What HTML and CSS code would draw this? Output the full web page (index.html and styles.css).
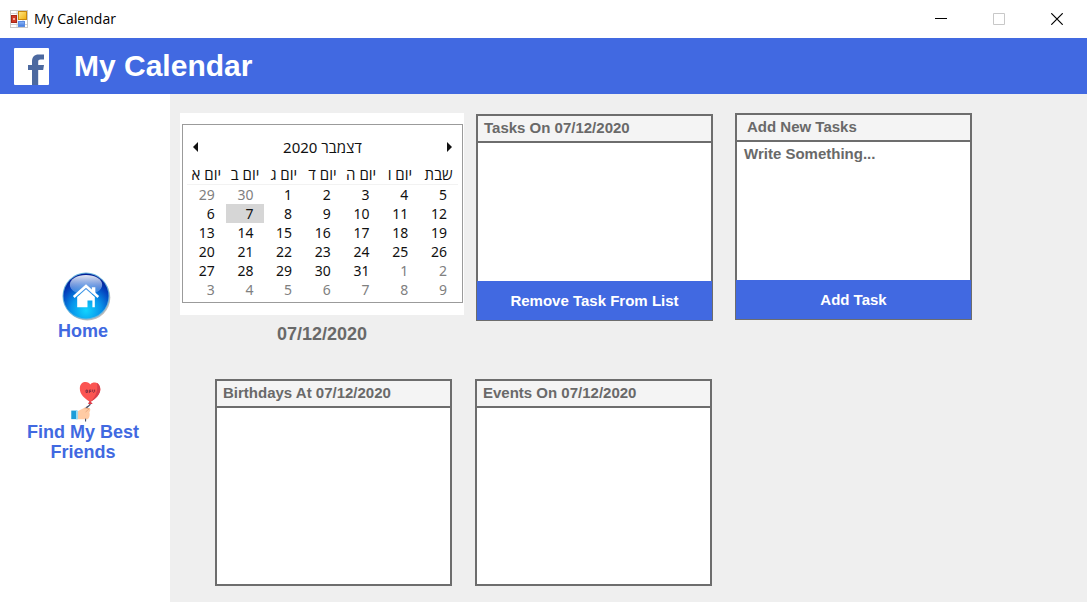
FILE: index.html
```html
<!DOCTYPE html>
<html lang="en">
<head>
<meta charset="utf-8">
<meta name="viewport" content="width=device-width, initial-scale=1">
<title>My Calendar</title>
<link rel="stylesheet" href="styles.css">
</head>
<body>
<div class="window">
  <div class="titlebar">
    <svg class="app-icon" viewBox="0 0 18 18" aria-hidden="true">
      <defs>
        <linearGradient id="gold" x1="0" y1="0" x2="1" y2="1"><stop offset="0" stop-color="#ffe98a"/><stop offset="1" stop-color="#f0ad08"/></linearGradient>
        <linearGradient id="sky" x1="0" y1="0" x2="0" y2="1"><stop offset="0" stop-color="#8fb8f8"/><stop offset="1" stop-color="#3f78dc"/></linearGradient>
      </defs>
      <rect x=".5" y=".5" width="17" height="17" fill="#fff" stroke="#c8c8c8"/>
      <path d="M1 3.5h16M1 14.5h16M7 1v16M13 10v7" stroke="#d2d2d2" fill="none"/>
      <rect x="1.5" y="5.5" width="5" height="7" fill="#cf3a24" stroke="#a82616"/>
      <rect x="3" y="8" width="2" height="2" fill="#f5a79a"/>
      <rect x="8.500" y="1.500" width="8" height="8" fill="url(#gold)" stroke="#c8860c"/>
      <rect x="8.500" y="11.500" width="6" height="5" fill="url(#sky)" stroke="#5c8ce0"/>
    </svg>
    <span class="window-title">My Calendar</span>
    <div class="window-controls">
      <button class="window-button" type="button" aria-label="Minimize"><svg viewBox="0 0 12 12"><path d="M0 5.500h12" stroke="#000"/></svg></button>
      <button class="window-button" type="button" aria-label="Maximize" disabled><svg viewBox="0 0 12 12"><path d="M.5.5h11v11H.5z" fill="none" stroke="#c8c8c8"/></svg></button>
      <button class="window-button" type="button" aria-label="Close"><svg viewBox="0 0 12 12"><path d="M.3.300l11.400 11.400M11.700.300L.300 11.700" stroke="#000" stroke-width="1.200"/></svg></button>
    </div>
  </div>

  <header class="header">
    <svg class="brand" viewBox="0 0 35 37" aria-hidden="true">
      <rect width="35" height="37" rx="1" fill="#fff"/>
      <path d="M18 37V22h-4v-5h4v-3.500C18 9 20.500 6.500 24.500 6.500H30v5h-3.500c-1.700 0-2.300.8-2.300 2.300V17H30l-.8 5h-5v15z" fill="#4c69a0"/>
    </svg>
    <h1 class="page-title">My Calendar</h1>
  </header>

  <div class="content">
    <nav class="sidebar">
      <a class="nav-link" href="#home">
        <svg class="nav-icon home-icon" viewBox="0 0 50 50" aria-hidden="true">
          <defs>
            <radialGradient id="orb" cx=".5" cy=".82" r=".75"><stop offset="0" stop-color="#12d4ff"/><stop offset=".45" stop-color="#0793ea"/><stop offset=".8" stop-color="#0342bd"/><stop offset="1" stop-color="#021f96"/></radialGradient>
            <linearGradient id="gloss" x1="0" y1="0" x2="0" y2="1"><stop offset="0" stop-color="#fff" stop-opacity=".9"/><stop offset="1" stop-color="#9ac8ff" stop-opacity=".25"/></linearGradient>
          </defs>
          <circle cx="25.800" cy="26" r="23.500" fill="#777" opacity=".5"/>
          <circle cx="24.500" cy="24.500" r="24" fill="#68b4dc"/>
          <circle cx="24.500" cy="24.500" r="23" fill="url(#orb)"/>
          <ellipse cx="24.500" cy="13" rx="16.500" ry="10" fill="url(#gloss)"/>
          <path d="M12 25.500L24.500 14.300 37 25.500" fill="none" stroke="#fff" stroke-width="2.600"/>
          <path d="M30.500 15.500h3.500v8l-3.500-3z" fill="#fff"/>
          <path d="M15.500 25.500l9-8 9 8V36H31v-7h-5v7H15.500z" fill="#fff"/>
        </svg>
        <span>Home</span>
      </a>
      <a class="nav-link" href="#friends">
        <svg class="nav-icon balloon-icon" viewBox="0 0 32 42" aria-hidden="true">
          <path d="M20 22c0 3-1 3-3 4s-2 2-2 4" fill="none" stroke="#4b5368" stroke-width="1.500"/>
          <path d="M20 21C14 17 9 13 9 7c0-5 3-7 6-7 2.500 0 4 1 5 2.500C21 1 22.500.5 25 .5c3 0 5.500 3 5.500 7 0 5.500-5 10-10.500 13.500z" fill="#fb5552"/>
          <path d="M27 1c2 1 3.500 3.500 3.500 6.500 0 5.500-5 10-10.500 13.500C25 16 28.500 10 27 1z" fill="#d93f4c"/>
          <path d="M19.500 19.500l3 3.500h-5z" fill="#d93f4c"/>
          <path d="M15.500 8.500h1.500v2.500h-1.500zM19 11.500v-3h2M19 10h2M22.500 8v2l1 1 1-1V8" fill="none" stroke="#7f2e40"/>
          <path d="M6 31l8-4 5 .5c2 1 .5 3 0 4.500 1 3-.5 7-2 7H6z" fill="#ffcba4"/>
          <path d="M14 27.500l5 .5-4 3.500" fill="none" stroke="#eaa980"/>
          <path d="M0 30h6v9H0z" fill="#1d9dd8"/><path d="M5 30h2v9H5z" fill="#9addf5"/>
          <path d="M15 38.500v3" stroke="#4b5368" stroke-width="1.200"/>
        </svg>
        <span>Find My Best Friends</span>
      </a>
    </nav>

    <main class="main">
      <div class="row">
        <section class="date-picker" aria-label="Calendar">
          <div class="calendar-frame">
            <div class="calendar">
              <div class="month-bar">
                <button class="month-button" type="button" aria-label="Previous month"><svg viewBox="0 0 5 10"><path d="M5 0v10L0 5z" fill="#111"/></svg></button>
                <span dir="rtl" lang="he">דצמבר 2020</span>
                <button class="month-button" type="button" aria-label="Next month"><svg viewBox="0 0 5 10"><path d="M0 0v10l5-5z" fill="#111"/></svg></button>
              </div>
              <table class="days">
                <thead lang="he">
                  <tr><th dir="rtl">יום א</th><th dir="rtl">יום ב</th><th dir="rtl">יום ג</th><th dir="rtl">יום ד</th><th dir="rtl">יום ה</th><th dir="rtl">יום ו</th><th dir="rtl">שבת</th></tr>
                </thead>
                <tbody>
                  <tr><td class="other">29</td><td class="other">30</td><td>1</td><td>2</td><td>3</td><td>4</td><td>5</td></tr>
                  <tr><td>6</td><td class="selected">7</td><td>8</td><td>9</td><td>10</td><td>11</td><td>12</td></tr>
                  <tr><td>13</td><td>14</td><td>15</td><td>16</td><td>17</td><td>18</td><td>19</td></tr>
                  <tr><td>20</td><td>21</td><td>22</td><td>23</td><td>24</td><td>25</td><td>26</td></tr>
                  <tr><td>27</td><td>28</td><td>29</td><td>30</td><td>31</td><td class="other">1</td><td class="other">2</td></tr>
                  <tr><td class="other">3</td><td class="other">4</td><td class="other">5</td><td class="other">6</td><td class="other">7</td><td class="other">8</td><td class="other">9</td></tr>
                </tbody>
              </table>
            </div>
          </div>
          <p class="current-date">07/12/2020</p>
        </section>

        <section class="panel panel-tasks">
          <h2 class="panel-title">Tasks On 07/12/2020</h2>
          <div class="panel-body"></div>
          <button class="panel-action" type="button">Remove Task From List</button>
        </section>

        <section class="panel panel-new">
          <h2 class="panel-title"><label for="new-task">Add New Tasks</label></h2>
          <textarea class="panel-body task-input" id="new-task" placeholder="Write Something..."></textarea>
          <button class="panel-action" type="button">Add Task</button>
        </section>
      </div>

      <div class="row row-lists">
        <section class="panel">
          <h2 class="panel-title">Birthdays At 07/12/2020</h2>
          <div class="panel-body"></div>
        </section>
        <section class="panel">
          <h2 class="panel-title">Events On 07/12/2020</h2>
          <div class="panel-body"></div>
        </section>
      </div>
    </main>
  </div>
</div>
</body>
</html>
```

FILE: styles.css
```css
* { box-sizing: border-box; }

body {
  margin: 0;
  background: #fff;
  color: #696969;
  font-family: "Liberation Sans", Arial, sans-serif;
}

button { font: inherit; border: 0; padding: 0; cursor: pointer; }
svg { display: block; }

.window {
  display: flex;
  flex-direction: column;
  min-height: 100vh;
}

.titlebar {
  display: flex;
  align-items: center;
  gap: 6px;
  height: 38px;
  padding: 0 1px 0 10px;
  background: #fff;
  color: #000;
  font: 14px/20px "Open Sans", "Noto Sans", sans-serif;
}

.app-icon { width: 18px; height: 18px; }

.window-controls { display: flex; margin-left: auto; }

.window-button {
  display: grid;
  place-items: center;
  width: 58px;
  height: 38px;
  background: none;
}

.window-button svg { width: 12px; height: 12px; }

.header {
  display: flex;
  align-items: center;
  gap: 25px;
  height: 56px;
  padding-left: 14px;
  background: #4169e1;
  color: #fff;
}

.brand { width: 35px; height: 37px; }

.page-title { margin: 0; font-size: 30px; line-height: 36px; }

.content { display: flex; flex: 1; }

.sidebar {
  display: flex;
  flex-direction: column;
  align-items: center;
  gap: 41px;
  flex: 0 0 170px;
  padding: 178px 24px 24px 20px;
}

.nav-link {
  display: flex;
  flex-direction: column;
  align-items: center;
  color: #4169e1;
  font-size: 18px;
  font-weight: bold;
  line-height: 20px;
  text-align: center;
  text-decoration: none;
}

.nav-icon { margin-left: 6px; }
.home-icon { width: 49px; height: 49px; }
.balloon-icon { width: 31px; height: 40px; }

.main {
  flex: 1;
  padding: 19px 10px 15px;
  background: #efefef;
}

.row { display: flex; align-items: flex-start; gap: 22px; }
.row > .date-picker { margin-right: -10px; }
.row-lists { gap: 23px; padding: 33px 0 0 35px; }

.date-picker { width: 284px; }

.calendar-frame { padding: 11px 1px 12px 2px; background: #fff; }

.calendar {
  padding: 12px 4px 3px;
  border: 1px solid #9b9b9b;
  color: #111;
  font: 14px/19px "Noto Sans", "Open Sans", "DejaVu Sans", sans-serif;
}

.month-bar {
  display: flex;
  align-items: center;
  justify-content: space-between;
  height: 20px;
  padding: 0 6px;
  font-size: 15px;
}

.month-button { background: none; }
.month-button svg { width: 5px; height: 10px; }

.days {
  width: 100%;
  margin-top: 8px;
  border-collapse: collapse;
  table-layout: fixed;
}

.days th { padding: 0; font-size: 15px; font-weight: normal; white-space: nowrap; text-align: center; }
.days thead { border-bottom: 1px solid #f2f2f2; }
.days td { height: 19px; padding: 0 11px 0 0; text-align: right; }
.days .other { color: #808080; }
.days .selected { background: #d6d6d6; }

.current-date {
  margin: 7px 0 0;
  font-size: 18px;
  font-weight: bold;
  line-height: 24px;
  text-align: center;
}

.panel {
  display: flex;
  flex-direction: column;
  width: 237px;
  height: 207px;
  border: 2px solid #6d6d6d;
  background: #fff;
}

.panel-title {
  margin: 0;
  padding: 0 6px;
  height: 27px;
  border-bottom: 2px solid #6d6d6d;
  background: #f4f4f4;
  font-size: 15px;
  line-height: 24px;
}

.panel-tasks { margin-top: 1px; }
.panel-tasks, .panel-new { border-bottom-width: 1px; }
.panel-new .panel-title { padding-left: 10px; }

.panel-body { flex: 1; }

.task-input {
  min-height: 0;
  padding: 2px 7px;
  border: 0;
  background: #fff;
  color: #696969;
  font: bold 15px/20px "Liberation Sans", Arial, sans-serif;
  resize: none;
}

.task-input::placeholder { color: #696969; opacity: 1; }

.panel-action {
  height: 39px;
  margin: 0 -1px;
  background: #4169e1;
  color: #fff;
  font-size: 15px;
  font-weight: bold;
}
```
